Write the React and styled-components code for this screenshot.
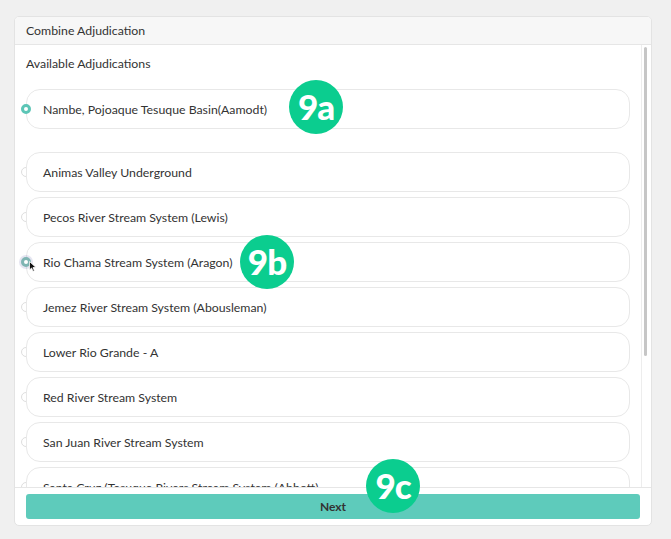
import styled, { createGlobalStyle } from "styled-components";

const GlobalStyle = createGlobalStyle`
  html, body {
    margin: 0;
    padding: 0;
    background: #f0f0f0;
    font-family: Lato, "Noto Sans", sans-serif;
  }
`;

const Page = styled.div`
  width: 671px;
  height: 539px;
  padding: 16px 19px 0 14px;
  box-sizing: border-box;
  position: relative;
`;

const Card = styled.div`
  height: 510px;
  background: #fff;
  border: 1px solid #e3e3e3;
  border-radius: 5px;
  display: flex;
  flex-direction: column;
  overflow: hidden;
  box-sizing: border-box;
`;

const Header = styled.div`
  height: 27px;
  flex: none;
  background: #f7f7f7;
  border-bottom: 1px solid #e6e6e6;
  display: flex;
  align-items: center;
  padding-left: 11px;
  font-size: 12.3px;
  color: #333;
`;

const Body = styled.div`
  flex: 1;
  min-height: 0;
  display: flex;
`;

const Scroll = styled.div`
  flex: 1;
  overflow: hidden;
  padding: 12px 11px 20px 11px;
`;

const Track = styled.div`
  width: 10px;
  flex: none;
  border-left: 1px solid #ededed;
  padding: 2px 4px 0 2px;
  box-sizing: border-box;
`;

const Thumb = styled.div`
  height: 309px;
  background: #c6c6c6;
  border-radius: 3px;
`;

const Label = styled.div`
  font-size: 12.3px;
  color: #333;
  line-height: 14px;
  margin-bottom: 18px;
`;

const List = styled.div`
  display: flex;
  flex-direction: column;
  gap: 5px;
`;

const Row = styled.div`
  display: flex;
  align-items: center;
  margin-left: -5px;
  margin-bottom: ${({ $gapAfter }) => ($gapAfter ? "18px" : "0")};
`;

const Radio = styled.span`
  width: 10px;
  height: 10px;
  border-radius: 50%;
  box-sizing: border-box;
  flex: none;
  margin-right: -5px;
  background: #fff;
  border: ${({ $state }) =>
    $state === "on"
      ? "3px solid #5cc5b6"
      : $state === "hover"
      ? "3px solid #7fb5b3"
      : "1px solid #dedede"};
  position: relative;
  z-index: ${({ $state }) => ($state === "off" ? 0 : 2)};
  box-shadow: ${({ $state }) =>
    $state === "hover" ? "0 0 0 2px rgba(150,150,200,0.25)" : "none"};
`;

const Item = styled.div`
  flex: 1;
  height: 40px;
  box-sizing: border-box;
  border: 1px solid #e8e8e8;
  border-radius: 14px;
  background: #fff;
  position: relative;
  z-index: 1;
  display: flex;
  align-items: center;
  padding-left: 16px;
  font-size: 12.3px;
  color: #333;
  white-space: nowrap;
`;

const Cursor = styled.svg`
  position: absolute;
  left: 5px;
  top: 1px;
  z-index: 3;
`;

const Footer = styled.div`
  flex: none;
  height: 38px;
  border-top: 1px solid #e6e6e6;
  padding: 6px 11px 7px 11px;
  box-sizing: border-box;
`;

const Button = styled.div`
  height: 25px;
  background: #5ecbbb;
  border-radius: 3px;
  display: flex;
  align-items: center;
  justify-content: center;
  font-size: 12px;
  font-weight: 700;
  color: #333;
`;

const Badge = styled.div`
  position: absolute;
  left: ${({ $x }) => $x - 27}px;
  top: ${({ $y }) => $y - 27}px;
  width: 54px;
  height: 54px;
  border-radius: 50%;
  background: #0bcd8f;
  color: #fff;
  display: flex;
  align-items: center;
  justify-content: center;
  font-family: Lato, "Noto Sans", sans-serif;
  font-weight: 900;
  font-size: 35px;
  letter-spacing: -1px;
  padding-bottom: 2px;
  box-sizing: border-box;
  z-index: 10;
`;

const items = [
  { name: "Nambe, Pojoaque Tesuque Basin(Aamodt)", state: "on", gapAfter: true },
  { name: "Animas Valley Underground" },
  { name: "Pecos River Stream System (Lewis)" },
  { name: "Rio Chama Stream System (Aragon)", state: "hover" },
  { name: "Jemez River Stream System (Abousleman)" },
  { name: "Lower Rio Grande - A" },
  { name: "Red River Stream System" },
  { name: "San Juan River Stream System" },
  { name: "Santa Cruz (Tesuque Rivers Stream System (Abbott)" },
];

export default function App() {
  return (
    <>
      <GlobalStyle />
      <Page>
        <Card>
          <Header>Combine Adjudication</Header>
          <Body>
            <Scroll>
              <Label>Available Adjudications</Label>
              <List>
                {items.map((it, i) => (
                  <Row key={i} $gapAfter={it.gapAfter}>
                    <Radio $state={it.state || "off"}>
                      {it.state === "hover" && (
                        <Cursor width="8" height="11" viewBox="0 0 8 11">
                          <path d="M0.5 0.5 L0.5 9 L2.6 7 L4 10.3 L5.4 9.7 L4 6.5 L7 6.5 Z" fill="#111" stroke="#fff" strokeWidth="0.8" />
                        </Cursor>
                      )}
                    </Radio>
                    <Item>{it.name}</Item>
                  </Row>
                ))}
              </List>
            </Scroll>
            <Track>
              <Thumb />
            </Track>
          </Body>
          <Footer>
            <Button>Next</Button>
          </Footer>
        </Card>
        <Badge $x={316} $y={107}>9a</Badge>
        <Badge $x={267} $y={262}>9b</Badge>
        <Badge $x={393} $y={486}>9c</Badge>
      </Page>
    </>
  );
}
